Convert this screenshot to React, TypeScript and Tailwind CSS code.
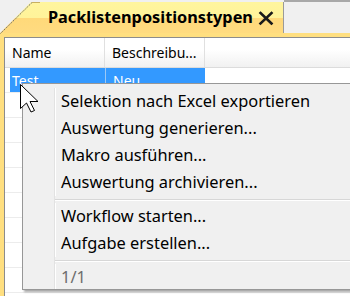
import React from "react";

const font = { fontFamily: '"Noto Sans", "Open Sans", sans-serif' };

function Gutter() {
  return (
    <>
      <div className="w-[32px] shrink-0 self-stretch border-r border-r-[#e2e2e2]" />
      <div className="w-px shrink-0 self-stretch bg-white" />
    </>
  );
}

function MenuItem({ children, muted }: { children: React.ReactNode; muted?: boolean }) {
  return (
    <div className="flex h-[27px] items-center">
      <Gutter />
      <div className={`pl-[5px] text-[16.4px] leading-none whitespace-nowrap ${muted ? "text-[#6d6d6d]" : "text-black"}`}>
        {children}
      </div>
    </div>
  );
}

function Separator() {
  return (
    <div className="flex h-[7px]">
      <div className="w-[32px] shrink-0 border-r border-r-[#e2e2e2]" />
      <div className="flex flex-1 flex-col justify-center">
        <div className="h-px bg-[#d7d7d7]" />
        <div className="h-px bg-white" />
      </div>
    </div>
  );
}

export default function App() {
  const rows = [0, 1, 2, 3, 4, 5, 6, 7, 8];
  return (
    <div className="relative h-[296px] w-[350px] overflow-hidden bg-[#f0f0f0]" style={font}>
      {/* Tab strip */}
      <div className="relative flex h-[33px]">
        <div className="relative mt-[2px] flex h-[31px] w-[284px] items-center bg-[linear-gradient(#fff59e_0%,#fff39a_50%,#ffd97a_52%,#ffdb80_100%)] pl-[48px] [clip-path:polygon(31px_0,100%_0,100%_100%,0_100%)] border-r border-r-[#9a9a9a]">
          <span className="text-[16.3px] font-bold leading-none text-black">Packlistenpositionstypen</span>
          <svg className="ml-[4px]" width="18" height="18" viewBox="0 0 18 18">
            <path d="M3.5 4 L14.5 14.5 M14.5 4 L3.5 14.5" stroke="#1a1a1a" strokeWidth="2.6" strokeLinecap="square" />
          </svg>
        </div>
        <div className="flex-1 border-t-2 border-t-[#a8a8a8]" />
        <svg className="absolute left-0 top-0" width="40" height="34" viewBox="0 0 40 34">
          <line x1="0.5" y1="33.5" x2="32" y2="2.5" stroke="#6a6a6a" strokeWidth="1" strokeDasharray="1.5 1" />
          <line x1="32" y1="2.5" x2="284" y2="2.5" stroke="#c8b060" strokeWidth="1" />
        </svg>
      </div>
      {/* Panel frame */}
      <div className="flex h-[263px] flex-col bg-[#ffdf80] pl-[4px] pt-[4px]">
        <div className="flex flex-1 flex-col border-l border-t border-[#8c8c8c] bg-white">
          {/* header */}
          <div className="flex h-[30px] border-b border-b-[#dcdcdc] bg-[linear-gradient(#ffffff_0%,#ffffff_40%,#f1f1f1_100%)] text-[14px] text-black">
            <div className="flex w-[100px] items-center border-r border-r-[#e0e0e0] pl-[7px]">Name</div>
            <div className="flex w-[100px] items-center border-r border-r-[#e0e0e0] pl-[7px]">Beschreibu...</div>
            <div className="flex-1" />
          </div>
          {/* rows */}
          <div className="flex h-[25px] border-b border-b-[#ececec] pl-[5px] text-[14px]">
            <div className="flex w-[95px] items-start bg-[#3399ff] pl-[2px] pt-[2px] text-white">Test</div>
            <div className="w-px bg-[#9cc8f5]" />
            <div className="flex w-[99px] items-start bg-[#3399ff] pl-[7px] pt-[2px] text-white">Neu</div>
          </div>
          {rows.map((r) => (
            <div key={r} className="h-[25px] shrink-0 border-b border-b-[#ececec]" />
          ))}
        </div>
      </div>

      {/* Context menu */}
      <div className="absolute left-[22px] top-[83px] w-[340px] border border-[#979797] bg-[#f0f0f0] pt-[4px] shadow-[2px_2px_2px_rgba(0,0,0,0.35)]">
        <MenuItem>Selektion nach Excel exportieren</MenuItem>
        <MenuItem>Auswertung generieren...</MenuItem>
        <MenuItem>Makro ausführen...</MenuItem>
        <MenuItem>Auswertung archivieren...</MenuItem>
        <Separator />
        <MenuItem>Workflow starten...</MenuItem>
        <MenuItem>Aufgabe erstellen...</MenuItem>
        <Separator />
        <div className="h-[25px] overflow-hidden">
          <MenuItem muted>1/1</MenuItem>
        </div>
      </div>

      {/* Cursor */}
      <svg className="absolute left-[20px] top-[84px]" width="22" height="30" viewBox="0 0 22 30">
        <path
          d="M0.5 0.5 L0.5 24.5 L6.5 19 L11 28 L14.5 26.5 L10 17.5 L18 17.5 Z"
          fill="#ffffff"
          stroke="#000000"
          strokeWidth="1"
          strokeLinejoin="miter"
        />
      </svg>
    </div>
  );
}
